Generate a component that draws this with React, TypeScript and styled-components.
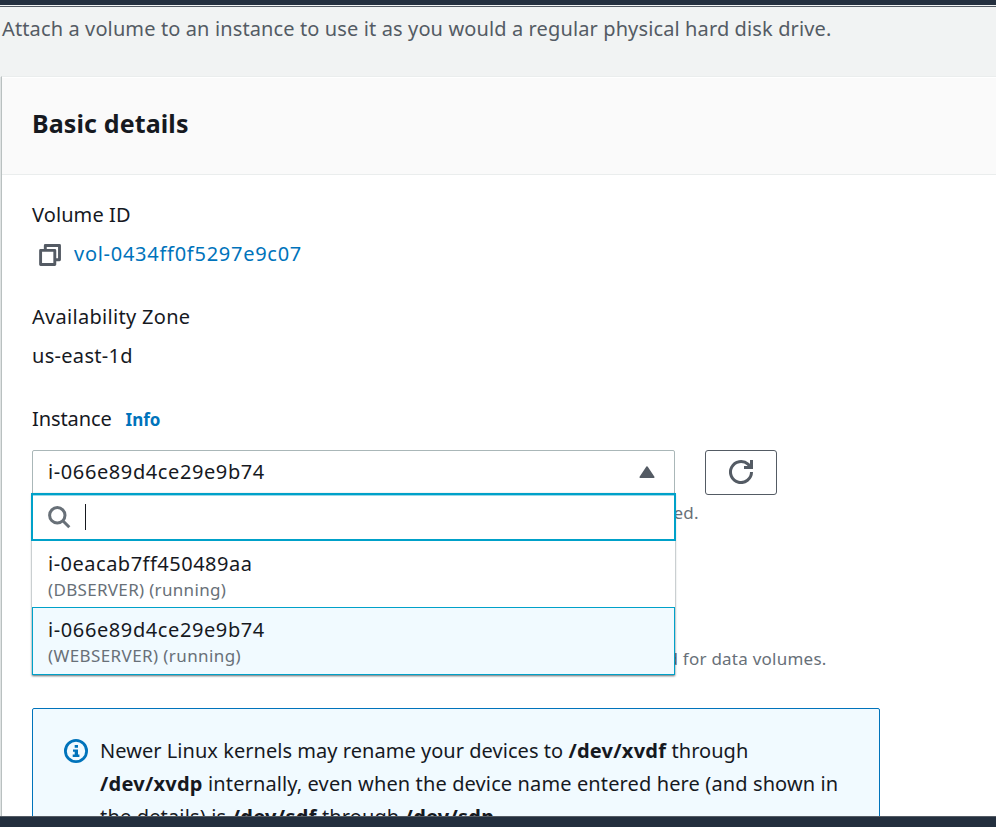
import React from "react";
import styled, { createGlobalStyle } from "styled-components";

const GlobalStyle = createGlobalStyle`
  * { box-sizing: border-box; }
  body {
    margin: 0;
    background: #fff;
    color: #16191f;
    font-family: "Noto Sans", "Open Sans", sans-serif;
    font-size: 20px;
    line-height: 30px;
    overflow: hidden;
  }
`;

const Page = styled.div`
  height: 827px;
  display: flex;
  flex-direction: column;
  overflow: hidden;
  background: #f1f3f3;
`;

const TopBar = styled.header`
  flex: none;
  height: 7px;
  background: #232f3e;
  border-bottom: 1px solid #545b64;
  box-shadow: inset 0 -1px 0 #f1f3f3;
`;

const Footer = styled.footer`
  flex: none;
  height: 11px;
  background: #232f3e;
  border-top: 1px solid #545b64;
`;

const Main = styled.main`
  flex: 1;
  min-height: 0;
  overflow: hidden;
`;

const Text = styled.span<{ $spacing?: number }>`
  white-space: pre;
  letter-spacing: ${(p) => p.$spacing ?? 0}px;
`;

const Intro = styled.p`
  margin: 0;
  height: 69px;
  padding: 7px 0 0 2px;
  color: #545b64;
`;

const Panel = styled.section`
  margin-left: 1px;
  height: 800px;
  background: #fff;
  border-left: 1px solid #b9c0c0;
  border-top: 1px solid #eaeded;
  box-shadow: -1px 1px 0 #dfe3e3;
`;

const PanelHeader = styled.div`
  height: 98px;
  padding: 27px 30px 0;
  background: #fafafa;
  border-bottom: 1px solid #eaeded;
  border-top: 1px solid #fff;
`;

const Heading = styled.h2`
  margin: 0;
  font-size: 25px;
  line-height: 36px;
  font-weight: 700;
`;

const Body = styled.div`
  padding: 25px 30px 0;
`;

const Field = styled.div`
  display: flex;
  flex-direction: column;
  gap: 9px;
  height: 102px;
`;

const CopyRow = styled.div`
  display: flex;
  align-items: center;
  padding-left: 7px;
  gap: 13px;
  color: #0073bb;

  svg { margin-top: 2px; }
`;

const LabelRow = styled.div`
  display: flex;
  align-items: baseline;
  gap: 14px;
`;

const InfoLink = styled.a`
  color: #0073bb;
  font-size: 17px;
  font-weight: 700;
`;

const ControlRow = styled.div`
  display: flex;
  gap: 30px;
  margin: 15px 0 6px;
`;

const SelectWrap = styled.div`
  position: relative;
  width: 643px;
  height: 45px;
`;

const SelectTrigger = styled.div`
  display: flex;
  align-items: center;
  justify-content: space-between;
  height: 45px;
  padding: 0 19px 1px 15px;
  border: 1px solid #aab7b8;
  border-radius: 2px;
`;

const RefreshButton = styled.button`
  display: flex;
  align-items: center;
  justify-content: center;
  width: 72px;
  height: 45px;
  padding: 0 0 1px;
  background: #fff;
  border: 1px solid #545b64;
  border-radius: 3px;
`;

const Menu = styled.div`
  position: absolute;
  z-index: 1;
  top: 43px;
  left: 0;
  width: 643px;
  background: #fff;
  box-shadow: 0 1px 2px rgba(0, 28, 36, 0.65);
`;

const SearchBox = styled.div`
  display: flex;
  align-items: center;
  height: 48px;
  margin: 0 -1px;
  padding-left: 15px;
  gap: 14px;
  background: #fff;
  border: 2px solid #00a1c9;
  box-shadow: inset 0 1px 0 rgba(0, 161, 201, 0.4);
`;

const Caret = styled.span`
  width: 1px;
  height: 26px;
  background: #16191f;
`;

const Option = styled.div<{ $selected?: boolean }>`
  display: flex;
  flex-direction: column;
  height: ${(p) => (p.$selected ? 68 : 66)}px;
  padding: ${(p) => (p.$selected ? "7px 15px 0" : "8px 16px 0")};
  background: ${(p) => (p.$selected ? "#f1faff" : "#fff")};
  border: ${(p) => (p.$selected ? "1px solid #00a1c9" : "0")};
`;

const OptionMeta = styled.span`
  margin-top: -1px;
  color: #687078;
  font-size: 17px;
  line-height: 24px;
`;

const Hint = styled.div<{ $height: number; $start: number }>`
  height: ${(p) => p.$height}px;
  padding-left: ${(p) => p.$start}px;
  color: #687078;
  font-size: 17px;
  line-height: 24px;
`;

const Alert = styled.div`
  display: flex;
  width: 848px;
  height: 150px;
  padding: 25px 31px;
  gap: 12px;
  background: #f1faff;
  border: 1px solid #0073bb;
  border-radius: 2px;
`;

const AlertIcon = styled.svg`
  flex: none;
  margin-top: 5px;
`;

const AlertText = styled.div`
  display: flex;
  flex-direction: column;
  line-height: 33px;
  strong { font-weight: 700; }
`;

const CopyIcon = () => (
  <svg width="22" height="22" viewBox="0 0 22 22" fill="none" stroke="#545b64" strokeWidth="2.9" strokeLinejoin="round">
    <path d="M1.6 6.4h14.2v14.1H1.6z" />
    <path d="M6.3 6.4V1.5h14.2v14.2h-4.6" />
  </svg>
);

const RefreshIcon = () => (
  <svg width="24" height="24" viewBox="0 0 24 24" fill="none" stroke="#545b64" strokeWidth="3">
    <path d="M22.5 12A10.5 10.5 0 1 1 19 4.2L22 7.3" />
    <path d="M22.5 0v7.5H15" />
  </svg>
);

const SearchIcon = () => (
  <svg width="23" height="23" viewBox="0 0 23 23" fill="none" stroke="#687078" strokeWidth="3">
    <circle cx="9.3" cy="9.3" r="7.7" />
    <path d="M14.8 14.8L21.3 21.3" />
  </svg>
);

const ArrowIcon = () => (
  <svg width="16" height="13" viewBox="0 0 16 13" fill="#545b64" stroke="#545b64" strokeWidth="1.5" strokeLinejoin="round">
    <path d="M8 1L14.8 11.2H1.2z" />
  </svg>
);

export default function App() {
  return (
    <Page>
      <GlobalStyle />
      <TopBar />
      <Main>
        <Intro>
          <Text $spacing={0.12}>Attach a volume to an instance to use it as you would a regular physical hard disk drive.</Text>
        </Intro>
        <Panel>
          <PanelHeader>
            <Heading><Text $spacing={0.12}>Basic details</Text></Heading>
          </PanelHeader>
          <Body>
            <Field>
              <Text $spacing={0.1}>Volume ID</Text>
              <CopyRow>
                <CopyIcon />
                <Text $spacing={0.73}>vol-0434ff0f5297e9c07</Text>
              </CopyRow>
            </Field>
            <Field>
              <Text $spacing={0.3}>Availability Zone</Text>
              <Text $spacing={0.3}>us-east-1d</Text>
            </Field>
            <LabelRow>
              <Text $spacing={-0.1}>Instance</Text>
              <InfoLink><Text $spacing={0}>Info</Text></InfoLink>
            </LabelRow>
            <ControlRow>
              <SelectWrap>
                <SelectTrigger>
                  <Text $spacing={0.6}>i-066e89d4ce29e9b74</Text>
                  <ArrowIcon />
                </SelectTrigger>
                <Menu>
                  <SearchBox>
                    <SearchIcon />
                    <Caret />
                  </SearchBox>
                  <Option>
                    <Text $spacing={0.5}>i-0eacab7ff450489aa</Text>
                    <OptionMeta><Text $spacing={0.32}>(DBSERVER) (running)</Text></OptionMeta>
                  </Option>
                  <Option $selected>
                    <Text $spacing={0.6}>i-066e89d4ce29e9b74</Text>
                    <OptionMeta><Text $spacing={0.4}>(WEBSERVER) (running)</Text></OptionMeta>
                  </Option>
                </Menu>
              </SelectWrap>
              <RefreshButton aria-label="Refresh"><RefreshIcon /></RefreshButton>
            </ControlRow>
            <Hint $height={146} $start={641.5}><Text $spacing={0.2}>ed.</Text></Hint>
            <Hint $height={61} $start={635.5}><Text $spacing={0.24}>d for data volumes.</Text></Hint>
            <Alert>
              <AlertIcon width="24" height="24" viewBox="0 0 24 24" fill="none">
                <circle cx="12" cy="12" r="10.6" stroke="#0073bb" strokeWidth="2.8" />
                <path d="M10.7 6h3.3v2.8h-3.3zM9 10.4h5v5.2h1.4V18H8.7v-2.4h2V12.8H9z" fill="#0073bb" />
              </AlertIcon>
              <AlertText>
                <div>
                  <Text $spacing={0.04}>Newer Linux kernels may rename your devices to </Text>
                  <strong><Text $spacing={0.25}>/dev/xvdf</Text></strong>
                  <Text $spacing={0.05}> through</Text>
                </div>
                <div>
                  <strong><Text $spacing={0.25}>/dev/xvdp</Text></strong>
                  <Text $spacing={0.12}> internally, even when the device name entered here (and shown in</Text>
                </div>
                <div>
                  <Text $spacing={0.16}>the details) is </Text>
                  <strong><Text $spacing={0.3}>/dev/sdf</Text></strong>
                  <Text $spacing={0.1}> through </Text>
                  <strong><Text $spacing={0.25}>/dev/sdp</Text></strong>
                  <Text>.</Text>
                </div>
              </AlertText>
            </Alert>
          </Body>
        </Panel>
      </Main>
      <Footer />
    </Page>
  );
}
